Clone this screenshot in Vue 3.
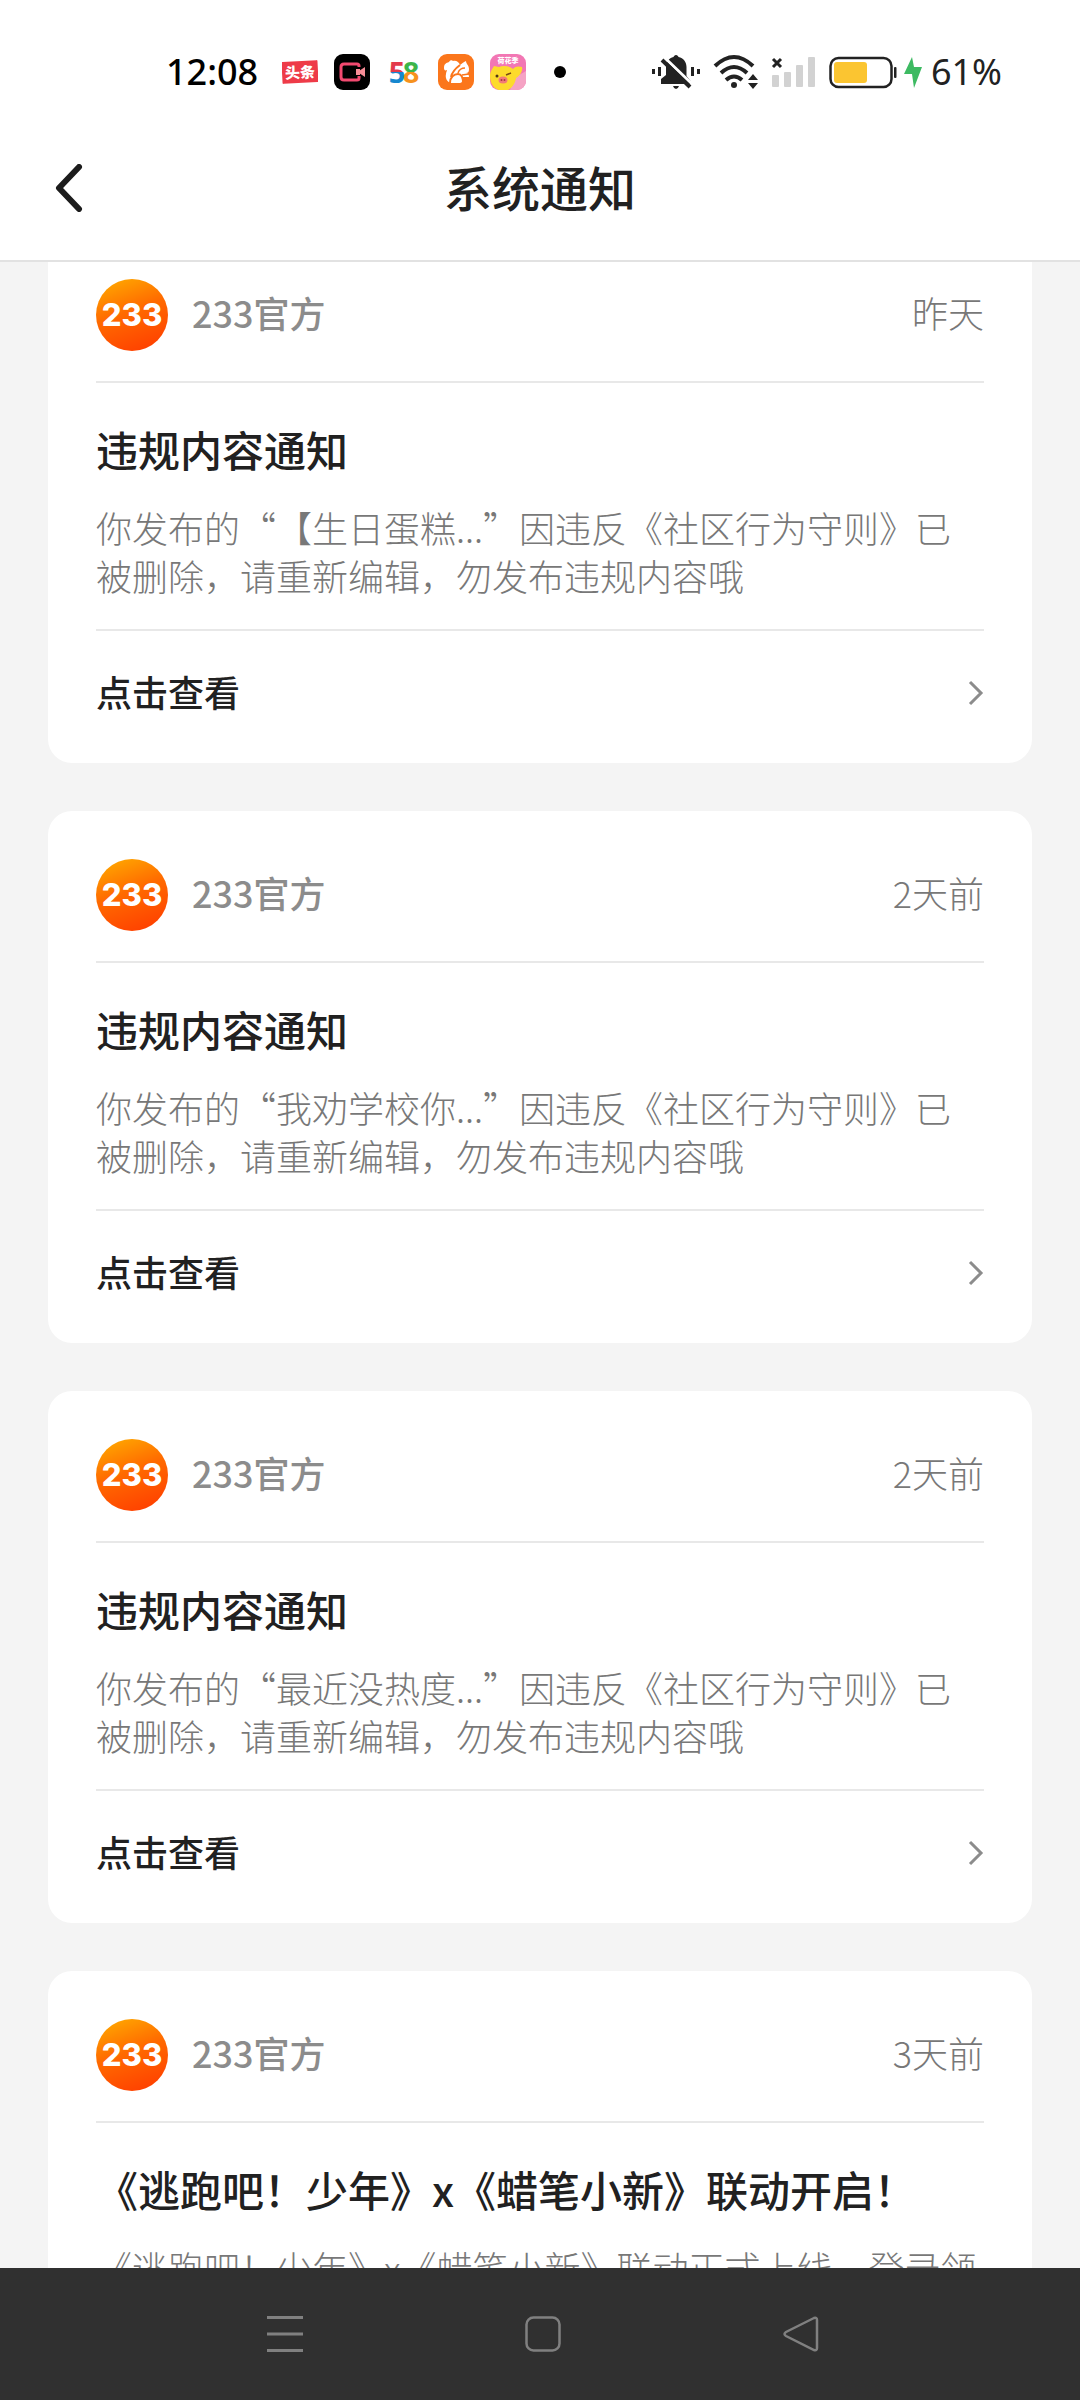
<template>
    <div class="page">
        <!-- Status bar -->
        <div class="status-bar">
            <div class="status-left">
                <span class="clock">12:08</span>
                <div class="app-icons">
                    <svg class="app-icon" viewBox="0 0 36 36">
                        <g transform="rotate(-3 18 18)">
                            <rect x="0" y="7" width="36" height="22" rx="1" fill="#ee3b48" />
                            <text x="18" y="24" text-anchor="middle" font-size="15" font-weight="900" fill="#fff">头条</text>
                        </g>
                    </svg>
                    <svg class="app-icon" viewBox="0 0 36 36">
                        <rect width="36" height="36" rx="9" fill="#000" />
                        <path d="M25 13V12q0-2-2-2H10q-3 0-3 3v10q0 3 3 3h13q2 0 2-2v-2" fill="none" stroke="#f24a70" stroke-width="3" />
                        <path d="M25 17l6-4v10l-6-4z" fill="#f78d97" />
                        <path d="M22 15h4v6h-4z" fill="#f78d97" />
                    </svg>
                    <svg class="app-icon" viewBox="0 0 36 36">
                        <defs>
                            <linearGradient id="five" x1="0" y1="0" x2="0" y2="1">
                                <stop offset="0.5" stop-color="#e33a4b" />
                                <stop offset="0.5" stop-color="#1687cf" />
                            </linearGradient>
                            <linearGradient id="eight" x1="0" y1="0" x2="0" y2="1">
                                <stop offset="0.5" stop-color="#3db54a" />
                                <stop offset="0.5" stop-color="#f6921e" />
                            </linearGradient>
                        </defs>
                        <text class="latin" x="11" y="29" text-anchor="middle" font-size="29" font-weight="700" fill="url(#five)">5</text>
                        <text class="latin" x="25" y="29" text-anchor="middle" font-size="29" font-weight="700" fill="url(#eight)">8</text>
                    </svg>
                    <svg class="app-icon" viewBox="0 0 36 36">
                        <rect width="36" height="36" rx="9" fill="#fb761b" />
                        <path d="M6 14c0-4 2-5 5-6 1-2 3-2 4-1 3-1 6 1 7 4 2-1 3-3 6-4 0 3 3 4 3 8 0 3-1 4-3 4 2 0 3 2 3 4h-6c0 3-1 6-3 6h-9c-4-1-6-5-5-9 0-2 1-3 1-4-2 1-3 0-3-2z" fill="#fff" />
                        <path d="M22 11c-4 3-8 7-9 12" fill="none" stroke="#fb761b" stroke-width="2" />
                        <path d="M12 29c0-6 4-9 8-9s5 4 5 9" fill="none" stroke="#fb761b" stroke-width="2" />
                        <path d="M20 19c1-3 4-5 7-5M24 21l7-1" fill="none" stroke="#fb761b" stroke-width="1.500" />
                    </svg>
                    <svg class="app-icon" viewBox="0 0 36 36">
                        <defs>
                            <clipPath id="tile">
                                <rect width="36" height="36" rx="9" />
                            </clipPath>
                        </defs>
                        <g clip-path="url(#tile)">
                            <rect width="36" height="36" fill="#f277b4" />
                            <path d="M20 36l4-12 12-7v19z" fill="#f5a3c4" />
                            <path d="M0 22c0-5 3-8 4-10 2 0 3 1 5 1 4-2 11-1 14 2 2-3 6-3 9-2 1 4-2 9-6 11-1 7-6 13-13 13S0 31 0 22z" fill="#fddb2c" />
                            <circle cx="7" cy="22" r="1.500" fill="#513614" />
                            <path d="M16 21l5-2" stroke="#7a4c16" stroke-width="1.500" />
                            <ellipse cx="13" cy="26" rx="4.500" ry="3.500" fill="#f27a77" />
                            <circle cx="11.500" cy="26" r="1" fill="#a43b42" />
                            <circle cx="14.500" cy="26" r="1" fill="#a43b42" />
                            <text x="18" y="9" text-anchor="middle" font-size="7" font-weight="900" fill="#fff">荷花季</text>
                        </g>
                    </svg>
                    <svg class="app-icon" viewBox="0 0 36 36">
                        <circle cx="18" cy="18" r="6" fill="#000" />
                    </svg>
                </div>
            </div>

            <div class="status-right">
                <svg width="50" height="36" viewBox="0 0 50 36">
                    <path d="M1 15h3v5H1zM7 13h3v9H7zM40 13h3v9h-3zM46 15h3v5h-3z" fill="#222" />
                    <path d="M25 1c1.500 0 2 1 2.500 2 5 1 8 5 8 10v9l4 5v3H10v-5l5-4v-8c0-5 3-9 7.500-10 .5-1 1-2 2.500-2z" fill="#222" />
                    <path d="M22 32h6q-1 3-3 3t-3-3z" fill="#222" />
                    <path d="M14 4l27 26" stroke="#fff" stroke-width="3" />
                    <path d="M11 6l28 27" stroke="#222" stroke-width="4" />
                </svg>
                <svg width="46" height="36" viewBox="0 0 46 36">
                    <g fill="none" stroke="#222" stroke-width="4">
                        <path d="M2 12q19-18 38 0" />
                        <path d="M8 19q13-12 26 0" />
                        <path d="M13 26q8-7 16 0" />
                    </g>
                    <circle cx="21" cy="31" r="3" fill="#222" />
                    <path d="M40 20l5 6H35zM35 29h10l-5 6z" fill="#222" />
                </svg>
                <svg width="46" height="36" viewBox="0 0 46 36">
                    <path d="M2 5l8 8M10 5l-8 8" stroke="#222" stroke-width="3" />
                    <g fill="#d2d2d2">
                        <rect x="1" y="21" width="7" height="12" rx="1" />
                        <rect x="13" y="18" width="7" height="15" rx="1" />
                        <rect x="25" y="11" width="7" height="22" rx="1" />
                        <rect x="37" y="3" width="7" height="30" rx="1" />
                    </g>
                </svg>
                <svg width="68" height="36" viewBox="0 0 68 36">
                    <rect x="1.500" y="4" width="61" height="29" rx="8" fill="none" stroke="#222" stroke-width="2.500" />
                    <rect x="5" y="8" width="33" height="21" rx="3" fill="#fbc531" />
                    <rect x="65" y="13" width="2.500" height="11" rx="1" fill="#222" />
                </svg>
                <div class="charge">
                    <svg width="20" height="36" viewBox="0 0 20 36">
                        <path d="M9 3L1 20h8l2 14 8-21h-8z" fill="#3dba62" />
                    </svg>
                    <span class="percent">61%</span>
                </div>
            </div>
        </div>

        <!-- Title bar -->
        <header class="header">
            <button class="back" type="button" aria-label="返回">
                <svg width="30" height="48" viewBox="0 0 30 48">
                    <path d="M25 3L5 24l20 21" fill="none" stroke="#1c1c1c" stroke-width="6" stroke-linecap="round" stroke-linejoin="round" />
                </svg>
            </button>
            <h1>系统通知</h1>
        </header>

        <!-- Notice list -->
        <main ref="listEl" class="list">
            <article v-for="notice in notices" :key="notice.id" class="card">
                <div class="card-head">
                    <span class="avatar">233</span>
                    <span class="name">233官方</span>
                    <span class="time">{{ notice.time }}</span>
                </div>
                <div class="card-body">
                    <h2>{{ notice.title }}</h2>
                    <p>{{ notice.text }}</p>
                </div>
                <a class="card-link" href="#">
                    <span>点击查看</span>
                    <svg width="18" height="28" viewBox="0 0 18 28">
                        <path d="M4 3l11 11L4 25" fill="none" stroke="#8c8c8c" stroke-width="3" />
                    </svg>
                </a>
            </article>
        </main>

        <!-- System navigation -->
        <nav class="nav-bar">
            <button type="button" aria-label="菜单">
                <svg width="38" height="38" viewBox="0 0 38 38">
                    <path d="M1 2.500h36M1 19h36M1 35.500h36" stroke="#808080" stroke-width="3" />
                </svg>
            </button>
            <button type="button" aria-label="主页">
                <svg width="38" height="38" viewBox="0 0 38 38">
                    <rect x="2.500" y="2.500" width="33" height="33" rx="7" fill="none" stroke="#808080" stroke-width="2.500" />
                </svg>
            </button>
            <button type="button" aria-label="后退">
                <svg width="38" height="38" viewBox="0 0 38 38">
                    <path d="M32 3L4 17q-3 2 0 4l28 14q3 1 3-2V5q0-3-3-2z" fill="none" stroke="#808080" stroke-width="2.500" />
                </svg>
            </button>
        </nav>
    </div>
</template>

<script setup>
import { ref, onMounted } from "vue";

// Full-width comma and exclamation mark
const COMMA = "\uff0c";
const BANG = "\uff01";

// Notice shown when a post has been removed
const removedText = (post) =>
    `你发布的“${post}...”因违反《社区行为守则》已被删除${COMMA}请重新编辑${COMMA}勿发布违规内容哦`;

const notices = [
    { id: 1, time: "昨天", title: "违规内容通知", text: removedText("【生日蛋糕") },
    { id: 2, time: "2天前", title: "违规内容通知", text: removedText("我劝学校你") },
    { id: 3, time: "2天前", title: "违规内容通知", text: removedText("最近没热度") },
    {
        id: 4,
        time: "3天前",
        title: `《逃跑吧${BANG}少年》x《蜡笔小新》联动开启${BANG}`,
        text: `《逃跑吧${BANG}少年》x《蜡笔小新》联动正式上线${COMMA}登录领`,
    },
];

// The list opens slightly scrolled
const listEl = ref(null);
onMounted(() => {
    listEl.value.scrollTop = 79;
});
</script>

<style>
body {
    margin: 0;
    background-color: #f4f4f4;
}
</style>

<style scoped>
.page {
    display: flex;
    flex-direction: column;
    height: 100vh;
    background-color: #f4f4f4;
    color: #212121;
    font-family: "Noto Sans CJK SC", sans-serif;
    text-spacing-trim: space-all;
}

svg {
    display: block;
    flex-shrink: 0;
}

button {
    display: flex;
    align-items: center;
    justify-content: center;
    padding: 0;
    border: none;
    background: none;
}

/* Status bar */
.status-bar {
    display: flex;
    flex-shrink: 0;
    align-items: center;
    justify-content: space-between;
    box-sizing: border-box;
    height: 116px;
    padding: 28px 78px 0 166px;
    background-color: #fff;
}

.status-left,
.status-right,
.charge {
    display: flex;
    align-items: center;
}

.status-left {
    gap: 24px;
}

.status-right {
    gap: 12px;
}

.charge {
    gap: 8px;
    margin-left: -6px;
}

.clock,
.percent {
    color: #000;
    font-family: "Noto Sans", sans-serif;
    font-size: 36px;
    font-weight: 500;
    line-height: 48px;
}

.percent {
    color: #222;
    font-weight: 400;
}

.app-icons {
    display: flex;
    gap: 16px;
}

.app-icon {
    width: 36px;
    height: 36px;
}

.latin {
    font-family: "Noto Sans", sans-serif;
}

/* Title bar */
.header {
    display: grid;
    flex-shrink: 0;
    grid-template-columns: 96px 1fr 96px;
    align-items: center;
    box-sizing: border-box;
    height: 146px;
    border-bottom: 2px solid #e2e2e2;
    background-color: #fff;
}

.back {
    justify-self: end;
    width: 48px;
    height: 72px;
    margin-right: 3px;
}

.header h1 {
    margin: 0;
    padding-bottom: 4px;
    font-size: 48px;
    font-weight: 500;
    line-height: 72px;
    text-align: center;
}

/* Notice list */
.list {
    display: flex;
    flex: 1;
    flex-direction: column;
    gap: 48px;
    min-height: 0;
    padding: 48px;
    overflow-y: auto;
    scrollbar-width: none;
}

.card {
    flex-shrink: 0;
    padding: 0 48px;
    border-radius: 24px;
    background-color: #fff;
}

.card-head {
    display: flex;
    align-items: center;
    padding: 48px 0 30px;
    border-bottom: 2px solid #e8e8e8;
}

.avatar {
    width: 72px;
    height: 72px;
    border-radius: 50%;
    background: linear-gradient(160deg, #ffa800 5%, #ff6a00 45%, #ff4200 90%);
    color: #fff;
    font-family: Inter, sans-serif;
    font-size: 31px;
    font-weight: 800;
    line-height: 72px;
    text-align: center;
}

.name,
.time {
    padding-bottom: 6px;
    font-size: 36px;
    line-height: 48px;
}

.name {
    margin-left: 24px;
    color: #8c8c8c;
    font-weight: 500;
}

.time {
    margin-left: auto;
    color: #787878;
    font-weight: 300;
}

.card-body {
    padding: 36px 0 30px;
    border-bottom: 2px solid #e8e8e8;
}

.card-body h2 {
    margin: 0 0 24px;
    font-size: 42px;
    font-weight: 500;
    line-height: 60px;
}

.card-body p {
    margin: 0;
    color: #787878;
    font-size: 36px;
    font-weight: 300;
    line-height: 48px;
}

.card-link {
    display: flex;
    align-items: flex-end;
    justify-content: space-between;
    padding: 36px 0 48px;
    color: #212121;
    font-size: 36px;
    font-weight: 500;
    line-height: 48px;
    text-decoration: none;
}

.card-link svg {
    margin-bottom: 8px;
}

/* System navigation */
.nav-bar {
    display: flex;
    flex-shrink: 0;
    justify-content: center;
    padding-left: 6px;
    background-color: #303030;
}

.nav-bar button {
    width: 258px;
    height: 132px;
}
</style>
